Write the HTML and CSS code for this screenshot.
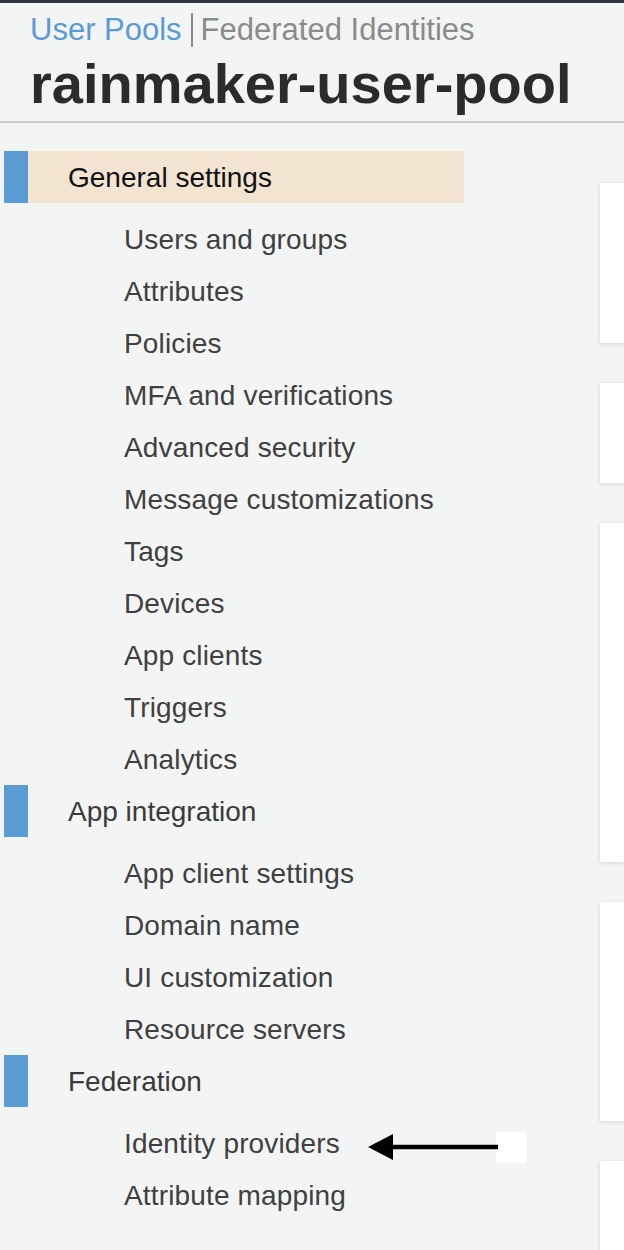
FILE: index.html
```html
<!DOCTYPE html>
<html lang="en">
<head>
<meta charset="utf-8">
<title>rainmaker-user-pool</title>
<link rel="stylesheet" href="styles.css">
</head>
<body>
<div class="topbar"></div>
<header class="header">
  <div class="crumbs">
    <span class="crumb active">User Pools</span>
    <span class="crumb-sep"></span>
    <span class="crumb">Federated Identities</span>
  </div>
  <h1 class="title">rainmaker-user-pool</h1>
</header>
<main class="main">
  <nav class="nav">
    <div class="group active">General settings</div>
    <ul class="items">
      <li class="item">Users and groups</li>
      <li class="item">Attributes</li>
      <li class="item">Policies</li>
      <li class="item">MFA and verifications</li>
      <li class="item">Advanced security</li>
      <li class="item">Message customizations</li>
      <li class="item">Tags</li>
      <li class="item">Devices</li>
      <li class="item">App clients</li>
      <li class="item">Triggers</li>
      <li class="item">Analytics</li>
    </ul>
    <div class="group">App integration</div>
    <ul class="items">
      <li class="item">App client settings</li>
      <li class="item">Domain name</li>
      <li class="item">UI customization</li>
      <li class="item">Resource servers</li>
    </ul>
    <div class="group">Federation</div>
    <ul class="items">
      <li class="item annotated">Identity providers
        <svg class="arrow" width="170" height="34" viewBox="0 0 170 34" aria-hidden="true">
          <rect x="132" y="2" width="30" height="31" fill="#ffffff"/>
          <line x1="26" y1="17" x2="134" y2="17" stroke="#000" stroke-width="4.5"/>
          <polygon points="4,17 29,4 29,30" fill="#000"/>
        </svg>
      </li>
      <li class="item">Attribute mapping</li>
    </ul>
  </nav>
  <section class="cards">
    <div class="card h160"></div>
    <div class="card h100"></div>
    <div class="card h339"></div>
    <div class="card h219"></div>
    <div class="card h120"></div>
  </section>
</main>
</body>
</html>
```

FILE: styles.css
```css
html, body {
  margin: 0;
  padding: 0;
}
body {
  background: #f3f5f5;
  font-family: "Liberation Sans", Arial, Helvetica, sans-serif;
  color: #444;
  width: 624px;
  height: 1250px;
  overflow: hidden;
}
.topbar {
  height: 3px;
  background: #2e353f;
}
.header {
  padding: 8px 0 7px 30px;
  border-bottom: 2px solid #cccccc;
}
.crumbs {
  display: flex;
  align-items: center;
  height: 38px;
  font-size: 31px;
  line-height: 38px;
}
.crumb {
  color: #8a8a8a;
}
.crumb.active {
  color: #5b9bd5;
}
.crumb-sep {
  width: 2px;
  height: 34px;
  background: #8a8a8a;
  margin: 0 8px 0 9px;
}
.title {
  margin: 5px 0 0 0;
  font-size: 56px;
  line-height: 60px;
  font-weight: bold;
  color: #2b2b2b;
}
.main {
  display: grid;
  grid-template-columns: 600px 1fr;
}
.nav {
  padding-top: 28px;
}
.group {
  margin-left: 4px;
  width: 396px;
  height: 52px;
  line-height: 54px;
  border-left: 24px solid #5b9bd5;
  padding-left: 40px;
  font-size: 28px;
  color: #3a3a3a;
}
.group.active {
  background: #f3e4d2;
  color: #111;
}
.items {
  list-style: none;
  margin: 10px 0 0 0;
  padding: 0;
}
.item {
  height: 52px;
  line-height: 54px;
  padding-left: 124px;
  font-size: 28px;
  letter-spacing: 0.15px;
  color: #404040;
}
.annotated {
  position: relative;
}
.arrow {
  position: absolute;
  left: 364px;
  top: 13px;
}
.cards {
  padding-top: 60px;
  display: flex;
  flex-direction: column;
  gap: 40px;
}
.card {
  background: #ffffff;
  border-radius: 2px 0 0 2px;
  box-shadow: 0 1px 4px rgba(0, 0, 0, 0.14);
}
.h160 { height: 160px; }
.h100 { height: 100px; }
.h339 { height: 339px; }
.h219 { height: 219px; }
.h120 { height: 120px; }
```
